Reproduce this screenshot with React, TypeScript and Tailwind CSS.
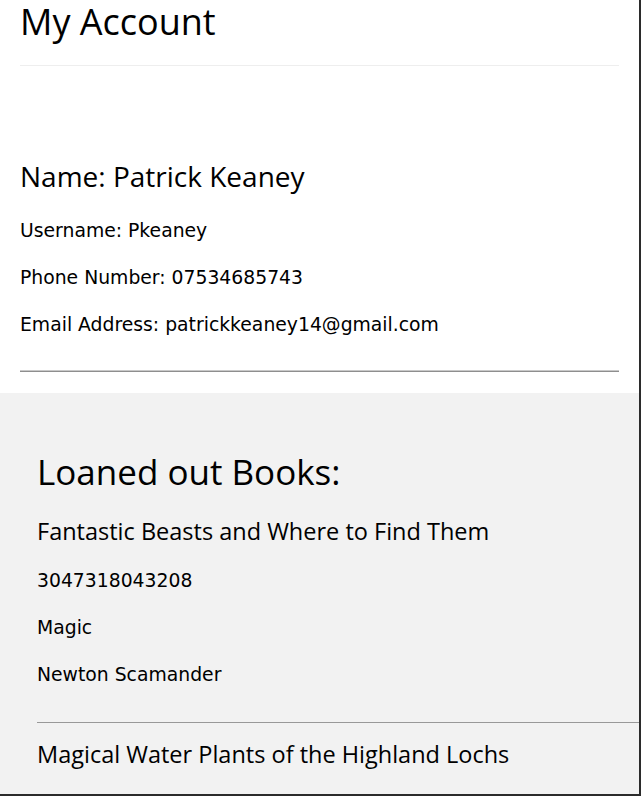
export default function App() {
  const user = {
    name: "Patrick Keaney",
    username: "Pkeaney",
    phone: "07534685743",
    email: "patrickkeaney14@gmail.com",
  };

  const books = [
    {
      title: "Fantastic Beasts and Where to Find Them",
      isbn: "3047318043208",
      genre: "Magic",
      author: "Newton Scamander",
    },
    {
      title: "Magical Water Plants of the Highland Lochs",
      isbn: "",
      genre: "",
      author: "",
    },
  ];

  const heading = "font-['Open_Sans',sans-serif] font-normal text-black";
  const body = "font-['DejaVu_Sans',Verdana,sans-serif] text-[18.8px] text-black";

  return (
    <div className="w-[641px] h-[796px] overflow-hidden bg-white border-r-2 border-b-2 border-[#2b2b2b] flex flex-col">
      {/* Account details */}
      <div className="px-[20px]">
        <h1 className={`${heading} text-[36px] leading-[44px]`}>My Account</h1>
        <div className="mt-[21px] h-px bg-[#eeeeee]" />
        <h2 className={`${heading} text-[28px] leading-[36px] mt-[92px]`}>
          Name: {user.name}
        </h2>
        <div className={`${body} mt-[26px] flex flex-col gap-[25px] leading-[22px]`}>
          <p>Username: {user.username}</p>
          <p>Phone Number: {user.phone}</p>
          <p>Email Address: {user.email}</p>
        </div>
        <div className="mt-[34px] h-[2px] border-t border-[#c8c8c8] bg-[#8e8e8e]" />
        <div className="h-[21px]" />
      </div>

      {/* Loans */}
      <div className="flex-1 bg-[#f2f2f2] pl-[37px] pt-[57px]">
        <h2 className={`${heading} text-[35px] leading-[44px]`}>Loaned out Books:</h2>
        {books.map((book, i) => (
          <div key={i} className={i > 0 ? "border-t border-[#999999] mt-[36px] pt-[16px]" : "mt-[22px]"}>
            <h3 className={`${heading} text-[23.5px] leading-[30px]`}>{book.title}</h3>
            {book.isbn && (
              <div className={`${body} mt-[24px] flex flex-col gap-[25px] leading-[22px]`}>
                <p>{book.isbn}</p>
                <p>{book.genre}</p>
                <p>{book.author}</p>
              </div>
            )}
          </div>
        ))}
      </div>
    </div>
  );
}
